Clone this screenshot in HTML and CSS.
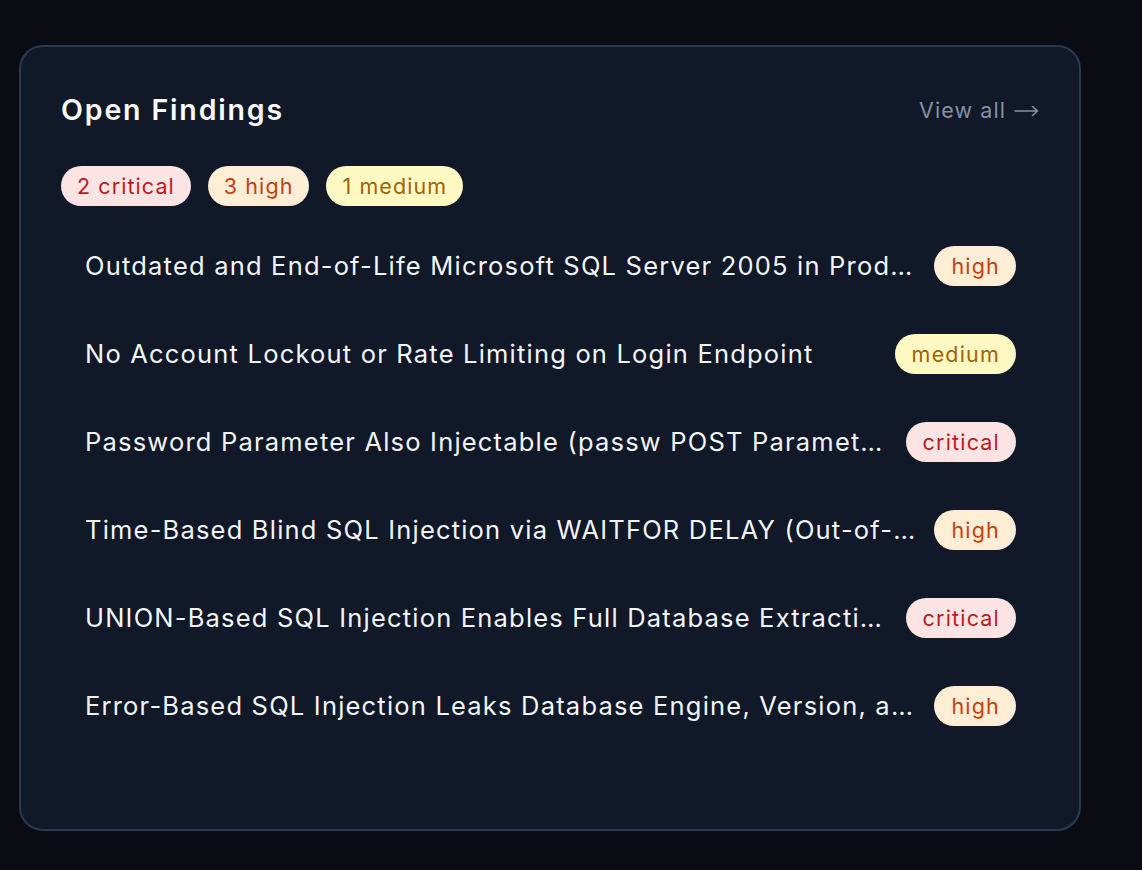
FILE: index.html
```html
<!DOCTYPE html>
<html lang="en">
<head>
<meta charset="utf-8">
<title>Open Findings</title>
<link rel="stylesheet" href="styles.css">
</head>
<body>
<div class="page">
  <section class="card">
    <header class="card-head">
      <h2 class="title">Open Findings</h2>
      <a class="view-all" href="#">View all <svg class="arrow" width="25" height="12" viewBox="0 0 25 12" aria-hidden="true"><path d="M1 6H23.5M18.5 1.5L23.5 6L18.5 10.5" fill="none" stroke="currentColor" stroke-width="1.6" stroke-linecap="round" stroke-linejoin="round"/></svg></a>
    </header>
    <div class="summary">
      <span class="pill critical">2 critical</span>
      <span class="pill high">3 high</span>
      <span class="pill medium">1 medium</span>
    </div>
    <ul class="list">
      <li class="row"><span class="name">Outdated and End-of-Life Microsoft SQL Server 2005 in Production Environment</span><span class="pill high">high</span></li>
      <li class="row"><span class="name">No Account Lockout or Rate Limiting on Login Endpoint</span><span class="pill medium">medium</span></li>
      <li class="row"><span class="name">Password Parameter Also Injectable (passw POST Parameter on Login Form)</span><span class="pill critical">critical</span></li>
      <li class="row"><span class="name">Time-Based Blind SQL Injection via WAITFOR DELAY (Out-of-Band Confirmation)</span><span class="pill high">high</span></li>
      <li class="row"><span class="name">UNION-Based SQL Injection Enables Full Database Extraction</span><span class="pill critical">critical</span></li>
      <li class="row"><span class="name">Error-Based SQL Injection Leaks Database Engine, Version, and Schema Details</span><span class="pill high">high</span></li>
    </ul>
  </section>
</div>
</body>
</html>
```
FILE: styles.css
```css
* { box-sizing: border-box; }
html, body { margin: 0; padding: 0; }
body {
  background: #0b0c13;
  font-family: Inter, "Noto Sans", "Liberation Sans", sans-serif;
  -webkit-font-smoothing: antialiased;
}
.page {
  padding: 45px 61px 39px 19px;
}
.card {
  background: #111827;
  border: 2px solid #2c394e;
  border-radius: 24px;
  padding: 41px 40px 40px 40px;
  min-height: 786px;
}
.card-head {
  display: flex;
  justify-content: space-between;
  align-items: center;
  height: 44px;
}
.title {
  margin: 0;
  color: #f8fafc;
  font-size: 28.5px;
  font-weight: 600;
  letter-spacing: 0.065em;
  line-height: 42px;
}
.view-all {
  display: flex;
  align-items: center;
  gap: 8px;
  color: #8591a6;
  text-decoration: none;
  font-size: 21.5px;
  letter-spacing: 0.05em;
  line-height: 30px;
}
.arrow {
  display: block;
  margin-top: 1px;
}
.summary {
  display: flex;
  gap: 17px;
  margin-top: 34px;
}
.pill {
  display: inline-block;
  border-radius: 999px;
  padding: 0 16px;
  height: 40px;
  line-height: 40px;
  font-size: 21.5px;
  letter-spacing: 0.05em;
  white-space: nowrap;
  flex-shrink: 0;
}
.row .pill {
  padding: 0 16px 0 17px;
  letter-spacing: 0.055em;
}
.pill.critical { background: #fce4e4; color: #b91c1c; }
.pill.high { background: #ffedd5; color: #c2410c; }
.pill.medium { background: #fef9c3; color: #a16207; }
.list {
  list-style: none;
  margin: 16px 0 0 0;
  padding: 0;
}
.row {
  display: flex;
  align-items: center;
  justify-content: space-between;
  gap: 19px;
  padding: 24px 23px 24px 24px;
}
.name {
  flex: 1;
  min-width: 0;
  overflow: hidden;
  white-space: nowrap;
  text-overflow: ellipsis;
  color: #f1f5f9;
  font-size: 25.5px;
  letter-spacing: 0.047em;
  line-height: 34px;
}
```
